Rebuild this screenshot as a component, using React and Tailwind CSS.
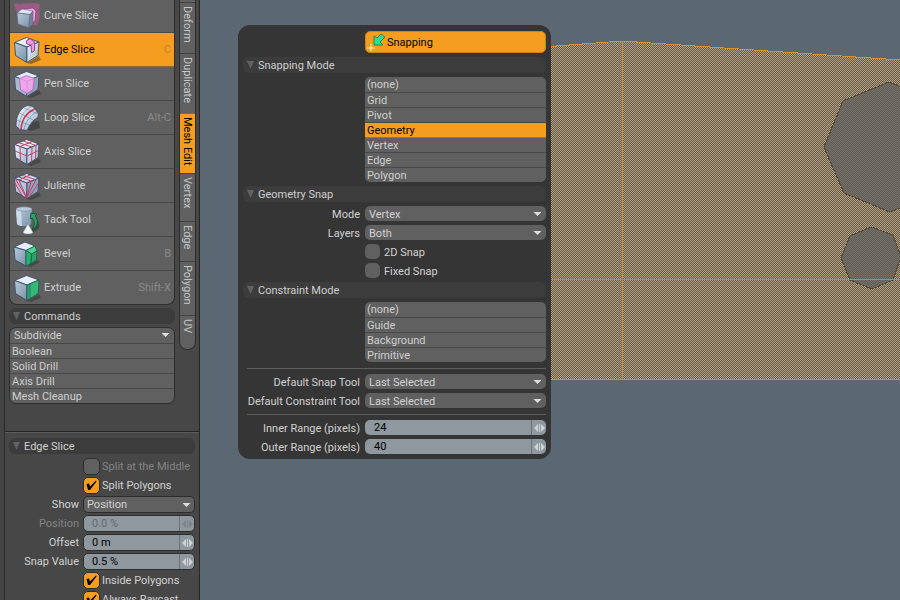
import { useState } from "react";
import clsx from "clsx";

const INK = "#3c4967";

function Cube({ left = "url(#steel)", right = "url(#frost)", top = "#e6eefa", children }) {
  return (
    <g stroke={INK} strokeWidth=".9" strokeLinejoin="round">
      <path d="M14 27 L26 20 L28 24 L18 28Z" fill="#2c2c2c" stroke="none" opacity=".45" />
      <path d="M13.5 1.5 L26 6 L14 11 L1.5 6.5Z" fill={top} />
      <path d="M1.5 6.5 L14 11 L13.8 26.5 L2.5 19.5Z" fill={left} />
      <path d="M26 6 L14 11 L13.8 26.5 L25 19.5Z" fill={right} />
      {children}
    </g>
  );
}

const icons = {
  curve: (
    <g strokeLinejoin="round">
      <path d="M1 2 C8 5 18 0 27 3 C25 10 29 16 24 24 L12 25 C7 20 3 12 1 2Z" fill="#a35c89" opacity=".85" />
      <path d="M9 8 L20 7 L23 10 L22 20 L18 23Z" fill="#f4a6e2" stroke="#8d3f77" strokeWidth=".8" />
      <path d="M4 12 L9 8 L20 10 L17 13.500Z" fill="#dce7f4" stroke="#5a6780" strokeWidth=".6" />
      <path d="M4 12 L17 13.500 L16 27 L5 23Z" fill="url(#steel)" stroke="#5a6780" strokeWidth=".6" />
      <path d="M17 13.500 L20 10 L20 23 L16 27Z" fill="#6f8298" stroke="#5a6780" strokeWidth=".6" />
    </g>
  ),
  edge: (
    <Cube>
      <path d="M13.5 4.5 L17 2.8 L21.8 5.8 L21.4 15 L18.6 16.5 L18 9 L13.5 7.8Z" fill="#f59be6" stroke="#8a3a8a" strokeWidth=".9" />
      <path d="M18 9 L21.8 5.8" fill="none" stroke="#c55ab8" />
    </Cube>
  ),
  pen: (
    <Cube left="#a9bad0" right="#8fa2bb">
      <path d="M13.5 5.5 L21 8.5 L20 19.5 L14 23.5 L7.5 19.5 L6.5 8.5Z" fill="#eea5ec" stroke="#b15fb4" strokeWidth=".8" />
      <path d="M6.500 8.500 L14 11.500 L21 8.500 M14 11.500 V23.500" fill="none" stroke="#c583cb" strokeWidth=".5" />
    </Cube>
  ),
  loop: (
    <g strokeLinejoin="round" fill="none">
      <path d="M14 26 C17 18 22 17 26 17 L27 24 L18 27Z" fill="#2c2c2c" opacity=".5" />
      <path d="M3 22 C3 11 8 3 15 1.5 L20 2.500 L25 9 C26 13 24 14 21 16 C18 19 16 22 14 26.5 L6 25Z" fill="url(#frost)" stroke={INK} strokeWidth=".8" />
      <path d="M5.5 24 C6 14 11 6 18 3M11 26 C12 19 16 12 24 8" stroke="#7b8ca5" strokeWidth=".7" />
      <path d="M3.5 16 L16 21M6.5 9 L20 16M11 4 L25 10" stroke="#7b8ca5" strokeWidth=".7" />
      <path d="M8 25.500 C8.500 17 13 9 21.500 5" stroke="#c93750" strokeWidth="1.4" />
    </g>
  ),
  axis: (
    <Cube left="url(#frost)" right="#bdd0e6">
      <path d="M7 8.500 L7.500 23M2 13 L14 18 L25.5 12.500M19 9 L18.500 23.500M23 7.500 L22.500 21.500M7 8.500 L19.500 3.500M6 4.800 L19 9M10 3 L23 7.500" fill="none" stroke="#c24560" strokeWidth="1" />
    </Cube>
  ),
  julienne: (
    <Cube left="#b7c4da" right="#8da4bd" top="#d4d8ea">
      <path d="M3 8 L13.8 26M6 8.500 L13.8 26M2 11 L9 23.500M18 9.500 L13.8 26M23 7.5 L13.8 26M25.5 11 L17 24M6 5 L18 9M10 3.5 L22 7.5M6 8 L17 3" fill="none" stroke="#c53e65" strokeWidth="1" />
    </Cube>
  ),
  tack: (
    <g>
      <path d="M16 27 C26 26 29 19 24 14 L19 23Z" fill="#2c2c2c" opacity=".5" />
      <path d="M3 3 L4 18 C6 21 16 21 18 18 L19 3Z" fill="url(#steel)" />
      <path d="M3 3 L4 18 C5 19 7 20 9 20 L8 4Z" fill="#dce8f6" opacity=".7" />
      <ellipse cx="11" cy="3" rx="8" ry="2.2" fill="#b9cadc" stroke="#71839b" strokeWidth=".6" />
      <path d="M18 7 L24 8 L22 10 C26 15 25 21 19 24 C22 19 22 15 19.500 12 L17.500 13Z" fill="#2aa567" stroke="#124a33" strokeWidth=".9" />
      <path d="M15 18 L20 26.500 C18 28.500 12 28.500 10 26.500Z" fill="#edf4fb" stroke="#8798ad" strokeWidth=".5" />
    </g>
  ),
  bevel: (
    <g stroke={INK} strokeWidth=".9" strokeLinejoin="round">
      <path d="M13 26 L24 20 L27 22 L18 27Z" fill="#2c2c2c" stroke="none" opacity=".45" />
      <path d="M12 2 L22 6 L13 10.500 L1 7Z" fill="#e6eefa" />
      <path d="M1 7 L13 10.500 L13 26 L2 20Z" fill="url(#steel)" />
      <path d="M22 6 L24 11 L18.500 14 L13 10.500Z" fill="#4fd28f" stroke="#17694a" />
      <path d="M13 10.500 L18.500 14 L18 23.500 L13 26Z" fill="#2cae70" stroke="#17694a" />
      <path d="M18.500 14 L24 11 L23.500 20 L18 23.500Z" fill="#2a9f68" stroke="#17694a" />
    </g>
  ),
  extrude: (
    <Cube left="url(#steel)" right="#2ca96c">
      <path d="M17 10 L26 6 L25 19.500 L17 24.500Z" fill="#35b877" stroke="#17694a" strokeWidth=".7" />
    </Cube>
  ),
};

const tools = [
  { name: "Curve Slice", icon: "curve" },
  { name: "Edge Slice", icon: "edge", key: "C" },
  { name: "Pen Slice", icon: "pen" },
  { name: "Loop Slice", icon: "loop", key: "Alt-C" },
  { name: "Axis Slice", icon: "axis" },
  { name: "Julienne", icon: "julienne" },
  { name: "Tack Tool", icon: "tack" },
  { name: "Bevel", icon: "bevel", key: "B" },
  { name: "Extrude", icon: "extrude", key: "Shift-X" },
];

const tabs = [
  { name: "Deform", size: "h-[51px]" },
  { name: "Duplicate", size: "h-[60px]" },
  { name: "Mesh Edit", size: "h-[60px]" },
  { name: "Vertex", size: "h-12" },
  { name: "Edge", size: "h-10" },
  { name: "Polygon", size: "h-[54px]" },
  { name: "UV", size: "h-[34px]" },
];

function Gradients() {
  return (
    <svg className="absolute size-0" aria-hidden="true">
      <linearGradient id="steel" x1="0" y1="0" x2="1" y2="1">
        <stop offset="0" stopColor="#b9cbdc" />
        <stop offset="1" stopColor="#7890a6" />
      </linearGradient>
      <linearGradient id="frost" x1="0" y1="0" x2="1" y2="1">
        <stop offset="0" stopColor="#eef6ff" />
        <stop offset="1" stopColor="#9fb6cd" />
      </linearGradient>
    </svg>
  );
}

function SectionHeader({ children, className }) {
  return (
    <h2 className={clsx("flex h-4 items-center gap-1 rounded-md bg-[#3c3c3c] pl-1 text-[#cfcfcf]", className)}>
      <svg className="h-2 w-[7px]" viewBox="0 0 7 8">
        <path d="M0 0 H7 L3.500 8Z" fill="#626262" />
      </svg>
      {children}
    </h2>
  );
}

function Dropdown({ id, value, options = [], boxed }) {
  return (
    <div className="relative">
      <select
        id={id}
        defaultValue={value}
        className={clsx(
          "block w-full appearance-none rounded-[5px] bg-[#606060] pr-5 text-[#d2d2d2] outline-none",
          boxed ? "h-[17px] border border-[#2d2d2d] pl-[3px]" : "h-[15px] pt-px pl-1"
        )}
      >
        {[value, ...options].map((o) => (
          <option key={o}>{o}</option>
        ))}
      </select>
      <svg className="pointer-events-none absolute top-1/2 right-1 h-1 w-[9px] -translate-y-1/2" viewBox="0 0 8 4">
        <path d="M0 0 H8 L4 4Z" fill="#dedede" />
      </svg>
    </div>
  );
}

function NumberField({ id, value, boxed, disabled }) {
  return (
    <div
      className={clsx(
        "flex overflow-hidden rounded-[5px] bg-[#8f979f]",
        boxed ? "h-[17px] border border-[#2d2d2d]" : "h-[15px]"
      )}
    >
      <input
        id={id}
        type="text"
        defaultValue={value}
        disabled={disabled}
        className={clsx(
          "min-w-0 flex-1 bg-transparent outline-none",
          boxed ? "pl-2" : "pl-[9px]",
          disabled ? "text-[#656b71]" : "text-black"
        )}
      />
      <button type="button" disabled={disabled} aria-label="Adjust value" className="w-[15px] border-l border-[#6d747b]">
        <svg className={clsx("mx-auto h-2 w-[11px]", disabled && "opacity-30")} viewBox="0 0 11 8">
          <path d="M4 0 V8 L0 4Z M7 0 V8 L11 4Z M5 0 H6 V8 H5Z" fill={disabled ? "#555" : "#d0d3d6"} />
        </svg>
      </button>
    </div>
  );
}

function Check({ id, label, checked = false, boxed, disabled }) {
  const [on, setOn] = useState(checked);
  return (
    <div className={clsx("col-start-2 flex items-center", boxed ? "h-[17px] gap-0.5" : "h-[15px] gap-1")}>
      <span className={clsx("relative shrink-0", boxed ? "size-[17px]" : "size-[15px]")}>
        <input
          id={id}
          type="checkbox"
          checked={on}
          disabled={disabled}
          onChange={() => setOn(!on)}
          className={clsx(
            "block size-full appearance-none rounded-[5px]",
            boxed && "border border-[#2d2d2d]",
            on ? "bg-[#f59d1e]" : "bg-[#606060]"
          )}
        />
        {on && (
          <svg className="pointer-events-none absolute inset-0 size-full" viewBox="0 0 17 17">
            <path d="M3.500 7 L6 6.500 L7 9.500 L13 3.500 L13.500 4.500 L7 13 L5 13Z" fill="#000" />
          </svg>
        )}
      </span>
      <label htmlFor={id} className={clsx("whitespace-nowrap", !boxed && "pt-px", disabled ? "text-[#838383]" : "text-[#d2d2d2]")}>
        {label}
      </label>
    </div>
  );
}

function OptionList({ options, initial }) {
  const [selected, setSelected] = useState(initial);
  return (
    <div className="col-start-2 flex flex-col overflow-hidden rounded-[5px] bg-[#606060]">
      {options.map((o) => (
        <button
          key={o}
          type="button"
          onClick={() => setSelected(o)}
          className={clsx(
            "flex h-[15px] items-center border-b pl-0.5 text-left first:h-4 last:h-3.5 last:border-b-0",
            o === selected ? "border-[#b0711a] bg-[#f59d1e] text-black" : "border-[#494949] text-[#cfcfcf]"
          )}
        >
          {o}
        </button>
      ))}
    </div>
  );
}

function ToolList() {
  const [active, setActive] = useState("Edge Slice");
  return (
    <div className="flex flex-col overflow-hidden rounded-b-lg border-x border-b border-[#2d2d2d] bg-[#606060]">
      {tools.map((t) => (
        <button
          key={t.name}
          type="button"
          onClick={() => setActive(t.name)}
          className={clsx(
            "flex h-[34px] items-center gap-[3px] border-b px-[3px] text-left first:h-[33px] first:pb-0.5 last:h-[33px] last:border-b-0",
            t.name === active ? "border-[#95662a] bg-[#f59d1e] text-black" : "border-[#484848] text-[#cfcfcf]"
          )}
        >
          <svg className="size-7" viewBox="0 0 28 28">{icons[t.icon]}</svg>
          <span className="flex-1">{t.name}</span>
          <span className={t.name === active ? "text-[#b98339]" : "text-[#8a8a8a]"}>{t.key}</span>
        </button>
      ))}
    </div>
  );
}

function Commands() {
  return (
    <div className="overflow-hidden rounded-[7px] border border-[#2d2d2d] bg-[#606060] text-[#cfcfcf]">
      <div className="relative h-4 border-b border-[#484848]">
        <select aria-label="Subdivide" className="block h-[15px] w-full appearance-none pl-1 outline-none">
          <option>Subdivide</option>
        </select>
        <svg className="pointer-events-none absolute top-[5px] right-1 h-1 w-[9px]" viewBox="0 0 8 4">
          <path d="M0 0 H8 L4 4Z" fill="#dedede" />
        </svg>
      </div>
      {["Boolean", "Solid Drill", "Axis Drill", "Mesh Cleanup"].map((c) => (
        <button
          key={c}
          type="button"
          className="flex h-[15px] w-full items-center border-b border-[#484848] pl-0.5 last:h-3.5 last:border-b-0"
        >
          {c}
        </button>
      ))}
    </div>
  );
}

function Tabs() {
  const [tab, setTab] = useState("Mesh Edit");
  return (
    <nav className="w-[17px] overflow-hidden rounded-b-lg border-x border-b border-[#2d2d2d] bg-[#606060] pt-0.5">
      {tabs.map((t) => (
        <button
          key={t.name}
          type="button"
          onClick={() => setTab(t.name)}
          className={clsx(
            "flex w-full items-center border-t pt-[3px] [writing-mode:vertical-rl]",
            t.size,
            t.name === tab ? "border-[#95662a] bg-[#f59d1e] text-black" : "border-[#424242] text-[#c8c8c8]"
          )}
        >
          <span className="w-full leading-[15px]">{t.name}</span>
        </button>
      ))}
    </nav>
  );
}

function Sidebar() {
  return (
    <aside className="flex w-[200px] shrink-0 border-r border-[#262626] bg-[#444444] pl-1">
      <div className="flex min-w-0 flex-1 flex-col border-l border-[#2b2b2b] bg-[#474747]">
        <div className="flex h-[432px] shrink-0 gap-1 border-b border-[#252525] pr-[3px] pl-1">
          <div className="flex flex-1 flex-col gap-[3px]">
            <ToolList />
            <SectionHeader>Commands</SectionHeader>
            <Commands />
          </div>
          <div>
            <Tabs />
          </div>
        </div>
        <div className="flex flex-col gap-0.5 border-t border-[#5c5c5c] px-1 pt-[5px]">
          <SectionHeader className="mb-0.5">Edge Slice</SectionHeader>
          <div className="grid grid-cols-[70px_1fr] items-center gap-x-1 gap-y-0.5 text-[#d2d2d2]">
            <Check id="split-middle" label="Split at the Middle" boxed disabled />
            <Check id="split-polygons" label="Split Polygons" checked boxed />
            <label htmlFor="show" className="text-right">Show</label>
            <Dropdown id="show" value="Position" boxed />
            <label htmlFor="position" className="text-right text-[#838383]">Position</label>
            <NumberField id="position" value="0.0 %" boxed disabled />
            <label htmlFor="offset" className="text-right">Offset</label>
            <NumberField id="offset" value="0 m" boxed />
            <label htmlFor="snap-value" className="text-right">Snap Value</label>
            <NumberField id="snap-value" value="0.5 %" boxed />
            <Check id="inside" label="Inside Polygons" checked boxed />
            <Check id="raycast" label="Always Raycast" checked boxed />
          </div>
        </div>
      </div>
    </aside>
  );
}

// Selected mesh, drawn as a stippled surface with two unselected holes
function Mesh() {
  return (
    <svg className="absolute inset-0 size-full" viewBox="200 0 700 600" preserveAspectRatio="xMinYMin slice" shapeRendering="crispEdges">
      <defs>
        <pattern id="stipple" width="2" height="2" patternUnits="userSpaceOnUse">
          <rect width="2" height="2" fill="#67594a" />
          <path d="M0 0 H1 V1 H0Z M1 1 H2 V2 H1Z" fill="#b3a280" />
        </pattern>
        <pattern id="stipple-dim" width="2" height="2" patternUnits="userSpaceOnUse">
          <rect width="2" height="2" fill="#5f5c54" />
          <path d="M0 0 H1 V1 H0Z M1 1 H2 V2 H1Z" fill="#75726b" />
        </pattern>
      </defs>
      <path d="M530 48 L622 41 L900 60 V379.500 H530Z" fill="url(#stipple)" />
      <path d="M824 147 L843 101 L889 82 L936 101 L955 147 L936 193 L890 212 L844 193Z" fill="url(#stipple-dim)" stroke="#55493a" />
      <path d="M841 258 L850 236 L871 227 L893 235 L901 257 L893 280 L872 289 L850 280Z" fill="url(#stipple-dim)" stroke="#55493a" />
      <path d="M622.500 41 V380 M530 279.500 H900" fill="none" stroke="#c98a35" />
      <path d="M530 48 L622 41 L900 60 M530 379.500 H900" fill="none" stroke="#dc9028" />
    </svg>
  );
}

function SnappingPanel() {
  return (
    <section className="absolute top-[25px] left-[38px] w-[313px] rounded-xl bg-[#353535] px-[5px] pt-1.5 pb-[5px] text-[#d2d2d2]">
      <div className="grid grid-cols-[117px_1fr] items-center gap-x-[5px] gap-y-1">
        <button type="button" className="col-start-2 flex h-[22px] items-center gap-0.5 rounded-[5px] border border-[#c98220] bg-[#f59d1e] pl-px text-black">
          <svg className="size-[18px]" viewBox="0 0 18 18">
            <path d="M7 3 L7 12 L16 12 L13 9 L18 4 L14 1 L10 5Z" fill="#2fdc95" stroke="#18754f" strokeWidth=".8" />
            <path d="M4 12.500 V17.500 M1.500 15 H6.500" stroke="#fff" strokeWidth="1" />
            <path d="M4 11 V12 M4 18 V17 M0 15 H1 M7 15 H8" stroke="#fff3d8" strokeWidth="1" />
          </svg>
          Snapping
        </button>
        <SectionHeader className="col-span-2">Snapping Mode</SectionHeader>
        <OptionList options={["(none)", "Grid", "Pivot", "Geometry", "Vertex", "Edge", "Polygon"]} initial="Geometry" />
        <SectionHeader className="col-span-2">Geometry Snap</SectionHeader>
        <label htmlFor="mode" className="h-[15px] pt-px text-right">Mode</label>
        <Dropdown id="mode" value="Vertex" />
        <label htmlFor="layers" className="h-[15px] pt-px text-right">Layers</label>
        <Dropdown id="layers" value="Both" />
        <Check id="snap-2d" label="2D Snap" />
        <Check id="snap-fixed" label="Fixed Snap" />
        <SectionHeader className="col-span-2">Constraint Mode</SectionHeader>
        <OptionList options={["(none)", "Guide", "Background", "Primitive"]} />
        <hr className="col-span-2 mt-0.5 mb-px ml-1 border-[#5e5e5e]" />
        <label htmlFor="snap-tool" className="h-[15px] pt-px text-right">Default Snap Tool</label>
        <Dropdown id="snap-tool" value="Last Selected" />
        <label htmlFor="constraint-tool" className="h-[15px] pt-px text-right whitespace-nowrap">Default Constraint Tool</label>
        <Dropdown id="constraint-tool" value="Last Selected" />
        <hr className="col-span-2 mt-0.5 mb-px ml-1 border-[#5e5e5e]" />
        <label htmlFor="inner" className="h-[15px] pt-px text-right">Inner Range (pixels)</label>
        <NumberField id="inner" value="24" />
        <label htmlFor="outer" className="h-[15px] pt-px text-right">Outer Range (pixels)</label>
        <NumberField id="outer" value="40" />
      </div>
    </section>
  );
}

export default function App() {
  return (
    <div className="flex h-screen overflow-hidden bg-[#5c6774] font-[Roboto,sans-serif] text-[11px] leading-[15px]">
      <Gradients />
      <Sidebar />
      <main className="relative flex-1">
        <Mesh />
        <SnappingPanel />
      </main>
    </div>
  );
}
